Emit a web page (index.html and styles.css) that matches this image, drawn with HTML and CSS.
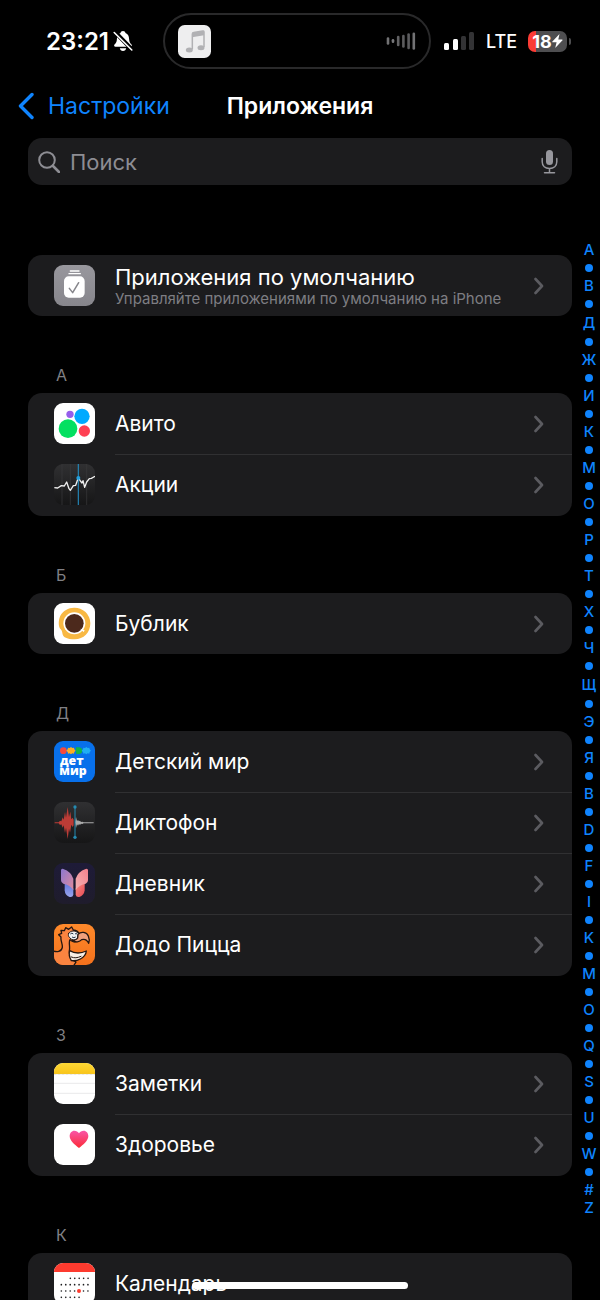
FILE: index.html
```html
<!DOCTYPE html>
<html lang="ru">
<head>
<meta charset="utf-8">
<meta name="viewport" content="width=device-width, initial-scale=1">
<title>Приложения</title>
<link rel="stylesheet" href="styles.css">
</head>
<body>
<svg class="defs" width="0" height="0" aria-hidden="true">
  <defs>
    <linearGradient id="g-gray" x1="0" y1="0" x2="0" y2="1"><stop offset="0" stop-color="#98979d"/><stop offset="1" stop-color="#87868c"/></linearGradient>
    <linearGradient id="g-dark" x1="0" y1="0" x2="0" y2="1"><stop offset="0" stop-color="#303032"/><stop offset="1" stop-color="#161617"/></linearGradient>
    <linearGradient id="g-yellow" x1="0" y1="0" x2="0" y2="1"><stop offset="0" stop-color="#fdd835"/><stop offset="1" stop-color="#f9c51a"/></linearGradient>
    <linearGradient id="g-heart" x1="0" y1="0" x2="0" y2="1"><stop offset="0" stop-color="#f954a8"/><stop offset="1" stop-color="#fb2c36"/></linearGradient>
    <linearGradient id="g-journal" x1="0" y1="0" x2="0" y2="1"><stop offset="0" stop-color="#1e1b38"/><stop offset="1" stop-color="#1f1c2c"/></linearGradient>
    <linearGradient id="g-wing-l" x1="0" y1="0" x2="1" y2="1"><stop offset="0" stop-color="#8a78d0"/><stop offset="1" stop-color="#e08a9c"/></linearGradient>
    <linearGradient id="g-wing-r" x1="0" y1="1" x2="1" y2="0"><stop offset="0" stop-color="#f4b3b4"/><stop offset="1" stop-color="#f2808c"/></linearGradient>
    <linearGradient id="g-tail-l" x1="0" y1="0" x2="0" y2="1"><stop offset="0" stop-color="#5b6fd8"/><stop offset="1" stop-color="#9ba6ee"/></linearGradient>
    <linearGradient id="g-tail-r" x1="0" y1="0" x2="1" y2="1"><stop offset="0" stop-color="#fa8f86"/><stop offset="1" stop-color="#e64a55"/></linearGradient>
    <linearGradient id="g-orange" x1="0" y1="0" x2="0" y2="1"><stop offset="0" stop-color="#ff8a2b"/><stop offset="1" stop-color="#f4711c"/></linearGradient>
    <clipPath id="tile"><rect width="123" height="123" rx="27"/></clipPath>
    <symbol id="chevron" viewBox="0 0 10 18"><path d="M1.500 2 8 9l-6.500 7" fill="none" stroke="#5b5b60" stroke-width="2.600" stroke-linecap="round" stroke-linejoin="round"/></symbol>
  </defs>
</svg>

<div class="screen">
  <header>
    <div class="status">
      <div class="status__left">
        <span class="status__time">23:21</span>
        <svg width="20" height="22" viewBox="0 0 20 22" aria-hidden="true">
          <path d="M10 1C8.600 1 7.700 1.900 7.500 3 5 4 4 6.200 3.900 9 3.800 12 3 13 1.500 14.500.700 15.500 1.200 16.800 2.500 16.800h15c1.300 0 1.800-1.300 1-2.300-1.500-1.500-2.300-2.500-2.400-5.500C16 6.200 15 4 12.500 3 12.300 1.900 11.400 1 10 1z" fill="#fff"/>
          <path d="M6.800 18.300h6.400c-.2 1.600-1.500 2.600-3.200 2.600s-3-1-3.200-2.600z" fill="#fff"/>
          <path d="M1.500 1.500 19 19.500" stroke="#000" stroke-width="4.200"/>
          <path d="M1.200 2.500 18.800 20" stroke="#fff" stroke-width="1.600" stroke-linecap="round"/>
        </svg>
      </div>
      <div class="island">
        <svg width="33" height="33" viewBox="0 0 99 99" aria-hidden="true">
          <rect width="99" height="99" rx="20" fill="#eeeeef"/>
          <path d="M43 73V27q0-4 4-4.600l27-4.600q4-.6 4 3.400V66" fill="none" stroke="#b1b1b4" stroke-width="4.500"/>
          <path d="M42 23l36-6v14l-36 6z" fill="#b1b1b4"/>
          <ellipse cx="34" cy="75" rx="10.500" ry="7.500" fill="#b1b1b4"/>
          <ellipse cx="69" cy="68" rx="10.500" ry="7.500" fill="#b1b1b4"/>
        </svg>
        <svg width="30" height="18" viewBox="0 0 30 18" aria-hidden="true">
          <g stroke-width="2.600" stroke-linecap="round">
            <path d="M2 6.500v5" stroke="#727274"/><path d="M7 8.200v1.600" stroke="#77777a"/><path d="M12.200 5v8" stroke="#626264"/><path d="M17.400 4v10.500" stroke="#5c5c5e"/><path d="M22.600 2.500v13.500" stroke="#5c5c5e"/><path d="M27.800 1.800v14.700" stroke="#727274"/>
          </g>
        </svg>
      </div>
      <div class="status__right">
        <svg width="31" height="20" viewBox="0 0 31 20" aria-hidden="true">
          <rect x="0" y="12" width="5" height="7" rx="1.500" fill="#fff"/><rect x="9" y="8" width="5" height="11" rx="1.500" fill="#fff"/><rect x="17" y="5" width="5" height="14" rx="1.500" fill="#333335"/><rect x="25" y="1" width="5" height="18" rx="1.500" fill="#333335"/>
        </svg>
        <span class="status__net">LTE</span>
        <div class="battery">
          <div class="battery__body">18<svg width="11" height="14" viewBox="0 0 11 14" aria-hidden="true"><path d="M7.500 0 .4 7.600q-.5.700.4.700H4.600L3.200 14l7.300-7.700q.5-.7-.4-.7H6.300z" fill="#fff"/></svg></div>
          <span class="battery__tip"></span>
        </div>
      </div>
    </div>
    <nav class="navbar">
      <a class="navbar__back" href="#">
        <svg width="16" height="28" viewBox="0 0 16 28" aria-hidden="true"><path d="M14 2.500 2.500 14 14 25.500" fill="none" stroke="#0f84fe" stroke-width="3.400" stroke-linecap="round" stroke-linejoin="round"/></svg>
        Настройки</a>
      <h1 class="navbar__title">Приложения</h1>
    </nav>
    <div class="search">
      <svg width="22" height="22" viewBox="0 0 22 22" aria-hidden="true"><circle cx="9" cy="9" r="7.800" fill="none" stroke="#8d8d93" stroke-width="2"/><path d="m15 15 6 6" stroke="#8d8d93" stroke-width="2.600" stroke-linecap="round"/></svg>
      <input class="search__input" type="search" placeholder="Поиск" aria-label="Поиск">
      <button class="search__mic" type="button" aria-label="Диктовка">
        <svg width="17" height="25" viewBox="0 0 17 25" aria-hidden="true"><rect x="5" y="1" width="7" height="15" rx="3.500" fill="#97979d"/><path d="M1.200 9.500v3.300c0 4.200 3 6.700 7.300 6.700s7.300-2.500 7.300-6.700V9.500M8.500 19.500v4M3.500 23.700h10" fill="none" stroke="#97979d" stroke-width="1.500" stroke-linecap="round"/></svg>
      </button>
    </div>
  </header>

  <div class="content">
    <main class="list">
      <ul class="card">
        <li class="row"><a class="row__link" href="#">
          <svg class="icon" viewBox="0 0 123 123" aria-hidden="true"><rect width="123" height="123" rx="27" fill="url(#g-gray)"/><path d="M49 18h26M45 26h34" stroke="#fff" stroke-width="4" stroke-linecap="round"/><rect x="30" y="34" width="62" height="64" rx="14" fill="#fff"/><path d="m46 70 10 13 18-30" fill="none" stroke="#86868b" stroke-width="4.500" stroke-linecap="round" stroke-linejoin="round"/></svg>
          <span class="row__body"><span class="row__text"><span class="row__title">Приложения по умолчанию</span><span class="row__note">Управляйте приложениями по умолчанию на iPhone</span></span>
          <svg class="chevron" aria-hidden="true"><use href="#chevron"/></svg></span></a></li>
      </ul>

      <h2 class="letter">А</h2>
      <ul class="card card--multi">
        <li class="row"><a class="row__link" href="#">
          <svg class="icon" viewBox="0 0 123 123" aria-hidden="true"><rect width="123" height="123" rx="27" fill="#fff"/><circle cx="42" cy="77" r="28" fill="#04e061"/><circle cx="84" cy="40" r="23" fill="#00aaff"/><circle cx="91" cy="84" r="17" fill="#ff4053"/><circle cx="48" cy="34" r="11" fill="#965eeb"/></svg>
          <span class="row__body"><span class="row__title">Авито</span><svg class="chevron" aria-hidden="true"><use href="#chevron"/></svg></span></a></li>
        <li class="row"><a class="row__link" href="#">
          <svg class="icon" viewBox="0 0 123 123" aria-hidden="true"><rect width="123" height="123" rx="27" fill="url(#g-dark)"/><path d="M24 0v123M49 0v123M98 0v123" stroke="#3b3b3d" stroke-width="2"/><path d="M73 0v123" stroke="#2486b8" stroke-width="3.500"/><path d="m1 71 10 1 11-7 9 1 7-12 7 20 4 5 9-14 7-1 8-23 6 10 5 6 3-7 5 20 6-16 8-10 6-1 11-6" fill="none" stroke="#eee" stroke-width="4" stroke-linejoin="round"/><circle cx="73" cy="42" r="6" fill="#239edb"/></svg>
          <span class="row__body"><span class="row__title">Акции</span><svg class="chevron" aria-hidden="true"><use href="#chevron"/></svg></span></a></li>
      </ul>

      <h2 class="letter">Б</h2>
      <ul class="card">
        <li class="row"><a class="row__link" href="#">
          <svg class="icon" viewBox="0 0 123 123" aria-hidden="true"><rect width="123" height="123" rx="27" fill="#fff"/><path d="M60 14a47 47 0 0 1 49 47c0 28-20 48-47 48-11 0-20-1-30-6-10-7-4-17-12-24-8-7-7-29-1-41 8-15 24-24 41-24z" fill="#f8b843"/><circle cx="61" cy="61" r="33" fill="#fff"/><circle cx="61" cy="61" r="28" fill="#4c291c"/><path d="m78 77 14 5-3 5z" fill="#fff"/></svg>
          <span class="row__body"><span class="row__title">Бублик</span><svg class="chevron" aria-hidden="true"><use href="#chevron"/></svg></span></a></li>
      </ul>

      <h2 class="letter">Д</h2>
      <ul class="card card--multi">
        <li class="row"><a class="row__link" href="#">
          <svg class="icon" viewBox="0 0 123 123" role="img" aria-label="дет мир"><rect width="123" height="123" rx="27" fill="#0870eb"/><circle cx="28" cy="29" r="10" fill="#f4493d"/><path d="m51 18 4 3 5-1 1 5 4 4-4 4-1 5-5-1-4 3-4-3-5 1-1-5-4-4 4-4 1-5 5 1z" fill="#ffae22"/><path d="M66 19h10q9 2 9 10t-8 10H67q-3-10-1-20z" fill="#12b34a"/><path d="m97 18 4 3 5-1 1 5 4 4-4 4-1 5-5-1-4 3-4-3-5 1-1-5-4-4 4-4 1-5 5 1z" fill="#20aef4"/><text class="brand"><tspan x="18" y="71">дет</tspan><tspan x="16" y="102">мир</tspan></text></svg>
          <span class="row__body"><span class="row__title">Детский мир</span><svg class="chevron" aria-hidden="true"><use href="#chevron"/></svg></span></a></li>
        <li class="row"><a class="row__link" href="#">
          <svg class="icon" viewBox="0 0 123 123" aria-hidden="true"><rect width="123" height="123" rx="27" fill="url(#g-dark)"/><path d="M2 61h12l4-5 4 2 4-12 3 7 4-23 3 17 5-32 4 30 4-16 3 23 4-5 3 6v17l-3 5-4-7-4 24-3-12-4 31-5-34-3 16-4-23-3 7-4-10-4 2-4-5H2z" fill="#bd3c36"/><path d="M63 61 66 45l3 12 3-3 3 4 3-2 3 4 4-1 4 2h30v3H89l-4 2-4-1-3 4-3-3-3 5-3-4-3 11z" fill="#aaa"/><path d="M63 14v92" stroke="#258bb2" stroke-width="3"/><circle cx="63" cy="15" r="5" fill="#258bb2"/><circle cx="63" cy="106" r="5" fill="#258bb2"/></svg>
          <span class="row__body"><span class="row__title">Диктофон</span><svg class="chevron" aria-hidden="true"><use href="#chevron"/></svg></span></a></li>
        <li class="row"><a class="row__link" href="#">
          <svg class="icon" viewBox="0 0 123 123" aria-hidden="true"><rect width="123" height="123" rx="27" fill="url(#g-journal)"/><path d="M32 55q16 2 26 22v18q-2 9-11 7-14-4-15-20z" fill="url(#g-tail-l)"/><path d="M92 55q-16 2-27 22v18q2 9 11 7 14-4 16-20z" fill="url(#g-tail-r)"/><path d="M21 22q0-6 7-4 23 8 30 29v34Q46 64 28 62q-7-2-7-10z" fill="url(#g-wing-l)"/><path d="M102 22q0-6-7-4-23 8-30 29v34q12-17 30-19 7-2 7-10z" fill="url(#g-wing-r)"/></svg>
          <span class="row__body"><span class="row__title">Дневник</span><svg class="chevron" aria-hidden="true"><use href="#chevron"/></svg></span></a></li>
        <li class="row"><a class="row__link" href="#">
          <svg class="icon" viewBox="0 0 123 123" aria-hidden="true"><g clip-path="url(#tile)"><rect width="123" height="123" fill="url(#g-orange)"/><g stroke="#241712" stroke-width="4" stroke-linejoin="round" stroke-linecap="round"><path d="M-4 80C8 86 23 83 25 70c1-11-6-20-4-31l-7-7 9-4-2-9 10 1 4-9 9 5 9-7 5 9c10 1 16 6 18 13l-4 19c-8 6-18 4-24-3-5 8 1 21-2 33-1 14 6 26 20 34l-10 16H-4z" fill="#fa8440"/><path d="M47 80c15 9 33 9 50 1-1 11-9 19-18 24-7 4-17 6-27 5-6-10-8-20-5-30z" fill="#f6eee5"/><path d="M52 99c9 4 18 3 29-2" fill="none" stroke-width="3"/><path d="M44 28c6-9 20-10 29 0l-2 18c-9 4-19 2-24-5-4-4-5-8-3-13z" fill="#eef0f2" stroke-width="3"/><path d="M72 31c9-10 26-7 31 5 3 7 4 15 1 22-5-11-12-14-21-11-6 7-18 9-28 3 6-1 13-3 16-8z" fill="#f0a07c"/></g><path d="M49 30q5-5 9 0M63 30q3-3 6 0M54 39q6 4 11 0" fill="none" stroke="#27394b" stroke-width="3"/></g></svg>
          <span class="row__body"><span class="row__title">Додо Пицца</span><svg class="chevron" aria-hidden="true"><use href="#chevron"/></svg></span></a></li>
      </ul>

      <h2 class="letter">З</h2>
      <ul class="card card--multi">
        <li class="row"><a class="row__link" href="#">
          <svg class="icon" viewBox="0 0 123 123" aria-hidden="true"><rect width="123" height="123" rx="27" fill="#fff"/><path d="M0 33v-6A27 27 0 0 1 27 0h69a27 27 0 0 1 27 27v6z" fill="url(#g-yellow)"/><path d="M0 34h123" stroke="#c8c3b4" stroke-width="2" stroke-dasharray="2 2"/><path d="M0 61h123M0 91h123" stroke="#dedee0" stroke-width="2"/></svg>
          <span class="row__body"><span class="row__title">Заметки</span><svg class="chevron" aria-hidden="true"><use href="#chevron"/></svg></span></a></li>
        <li class="row"><a class="row__link" href="#">
          <svg class="icon" viewBox="0 0 123 123" aria-hidden="true"><rect width="123" height="123" rx="27" fill="#fff"/><path d="M75 72C62 62 47 50 47 36c0-9 6-16 14-16 6 0 11 3 14 8 3-5 8-8 14-8 8 0 14 7 14 16 0 14-15 26-28 36z" fill="url(#g-heart)"/></svg>
          <span class="row__body"><span class="row__title">Здоровье</span><svg class="chevron" aria-hidden="true"><use href="#chevron"/></svg></span></a></li>
      </ul>

      <h2 class="letter">К</h2>
      <ul class="card">
        <li class="row"><a class="row__link" href="#">
          <svg class="icon" viewBox="0 0 123 123" aria-hidden="true"><rect width="123" height="123" rx="27" fill="#fff"/><path d="M0 27A27 27 0 0 1 27 0h69a27 27 0 0 1 27 27z" fill="#fd3b2f"/><g fill="none" stroke="#1c1c1e" stroke-width="5" stroke-linecap="round" stroke-dasharray="0 13.300"><path d="M49 46h54"/><path d="M22 65h81"/><path d="M22 84h81"/><path d="M22 103h55"/></g><circle cx="75" cy="84" r="6" fill="#fd3b2f"/></svg>
          <span class="row__body"><span class="row__title">Календарь</span></span></a></li>
      </ul>
    </main>

    <nav class="index" aria-label="Алфавитный указатель">
      <a href="#">А</a><i></i><a href="#">В</a><i></i><a class="tall" href="#">Д</a><i></i><a href="#">Ж</a><i></i><a href="#">И</a><i></i><a href="#">К</a><i></i><a href="#">М</a><i></i><a href="#">О</a><i></i><a href="#">Р</a><i></i><a href="#">Т</a><i></i><a href="#">Х</a><i></i><a href="#">Ч</a><i></i><a class="tall" href="#">Щ</a><i></i><a href="#">Э</a><i></i><a href="#">Я</a><i></i><a href="#">B</a><i></i><a href="#">D</a><i></i><a href="#">F</a><i></i><a href="#">I</a><i></i><a href="#">K</a><i></i><a href="#">M</a><i></i><a href="#">O</a><i></i><a href="#">Q</a><i></i><a href="#">S</a><i></i><a href="#">U</a><i></i><a href="#">W</a><i></i><a href="#">#</a><a href="#">Z</a>
    </nav>
  </div>
  <div class="home"></div>
</div>
</body>
</html>
```

FILE: styles.css
```css
* { box-sizing: border-box; }

body {
  margin: 0;
  background: #000;
  color: #fff;
  font-family: Inter, "Liberation Sans", sans-serif;
  font-size: 22px;
}

a { color: inherit; text-decoration: none; }
ul { list-style: none; margin: 0; padding: 0; }
svg { display: block; flex: none; }
.defs { position: absolute; }

.screen {
  position: relative;
  height: 100vh;
  overflow: hidden;
}

/* Status bar */
.status {
  display: grid;
  grid-template-columns: 1fr 268px 1fr;
  align-items: center;
  height: 82px;
  padding-right: 6px;
}
.status__left, .status__right { display: flex; align-items: center; }
.status__left { gap: 4px; padding-left: 46px; }
.status__time { font-size: 24px; font-weight: 600; }
.status__right { gap: 11px; padding-left: 13px; }
.status__net { font-size: 18px; font-weight: 500; }
.island {
  display: flex;
  align-items: center;
  justify-content: space-between;
  height: 56px;
  padding: 0 13px;
  border: 2px solid #29292a;
  border-radius: 28px;
}
.battery { display: flex; align-items: center; gap: 2px; }
.battery__body {
  display: flex;
  align-items: center;
  justify-content: center;
  width: 39px;
  height: 21px;
  border-radius: 7px;
  background: linear-gradient(90deg, #fb3c35 8px, #4e4e50 8px);
  font-size: 18px;
  font-weight: 700;
}
.battery__tip { width: 2px; height: 7px; border-radius: 0 2px 2px 0; background: #4e4e50; }

/* Navigation */
.navbar {
  display: grid;
  grid-template-columns: 1fr auto 1fr;
  align-items: center;
  height: 56px;
  padding: 0 18px 8px;
  font-size: 23px;
  line-height: 28px;
}
.navbar__back { display: flex; align-items: center; gap: 14px; color: #0f84fe; }
.navbar__title { margin: 0; font-size: 23px; font-weight: 600; }

.search {
  display: flex;
  align-items: center;
  gap: 10px;
  height: 47px;
  margin: 0 28px;
  padding: 0 14px 0 10px;
  border-radius: 14px;
  background: #1c1c1e;
}
.search__input {
  flex: 1;
  min-width: 0;
  padding: 0;
  border: 0;
  outline: 0;
  background: none;
  color: #fff;
  font: inherit;
}
.search__input::placeholder { color: #8d8d93; opacity: 1; }
.search__mic { padding: 0; border: 0; background: none; }

/* List and side index */
.content {
  display: grid;
  grid-template-columns: 1fr 28px;
  align-items: start;
  padding-left: 28px;
}
.list { padding-top: 70px; }
.card { border-radius: 14px; background: #1c1c1e; }
.card--multi { padding-bottom: 1px; }
.row__link { display: flex; align-items: center; gap: 20px; height: 61px; padding-left: 26px; }
.icon { width: 41px; height: 41px; }
.row__body {
  display: flex;
  flex: 1;
  align-items: center;
  justify-content: space-between;
  align-self: stretch;
  min-width: 0;
  padding-right: 28px;
}
.row + .row .row__body { border-top: 1px solid #303032; }
.row__text { display: flex; flex-direction: column; }
.row__title { font-size: 21px; line-height: 26px; white-space: nowrap; }
.row__text .row__title { font-size: 22px; }
.row__note { color: #7e7e83; font-size: 15px; line-height: 18px; white-space: nowrap; }
.chevron { width: 10px; height: 18px; }
.letter {
  margin: 0;
  padding: 49px 28px 8px;
  color: #808085;
  font-size: 16px;
  font-weight: 400;
  line-height: 20px;
}
.brand { fill: #fff; font-family: "Open Sans", sans-serif; font-size: 37px; font-weight: 800; }

.index {
  display: flex;
  flex-direction: column;
  align-items: center;
  padding: 56px 0 0 6px;
  color: #0f84fe;
  font-size: 15px;
  font-weight: 500;
  line-height: 18px;
}
.index .tall { line-height: 20px; }
.index i { width: 8px; height: 8px; margin: 5px 0; border-radius: 50%; background: #0f84fe; }

.home {
  position: absolute;
  bottom: 11px;
  left: 50%;
  width: 36%;
  height: 7px;
  border-radius: 4px;
  background: #fff;
  transform: translateX(-50%);
}
```
